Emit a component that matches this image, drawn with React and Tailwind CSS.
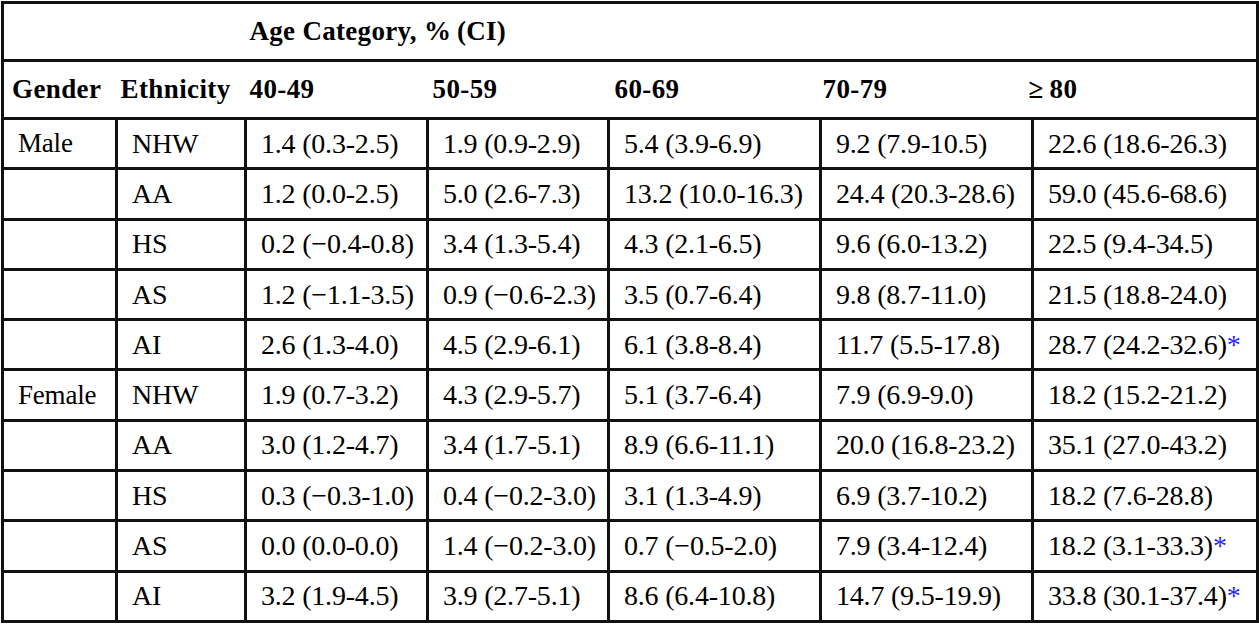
import React from "react";

const rows = [
  ["Male", "NHW", "1.4 (0.3-2.5)", "1.9 (0.9-2.9)", "5.4 (3.9-6.9)", "9.2 (7.9-10.5)", "22.6 (18.6-26.3)"],
  ["", "AA", "1.2 (0.0-2.5)", "5.0 (2.6-7.3)", "13.2 (10.0-16.3)", "24.4 (20.3-28.6)", "59.0 (45.6-68.6)"],
  ["", "HS", "0.2 (\u22120.4-0.8)", "3.4 (1.3-5.4)", "4.3 (2.1-6.5)", "9.6 (6.0-13.2)", "22.5 (9.4-34.5)"],
  ["", "AS", "1.2 (\u22121.1-3.5)", "0.9 (\u22120.6-2.3)", "3.5 (0.7-6.4)", "9.8 (8.7-11.0)", "21.5 (18.8-24.0)"],
  ["", "AI", "2.6 (1.3-4.0)", "4.5 (2.9-6.1)", "6.1 (3.8-8.4)", "11.7 (5.5-17.8)", "28.7 (24.2-32.6)*"],
  ["Female", "NHW", "1.9 (0.7-3.2)", "4.3 (2.9-5.7)", "5.1 (3.7-6.4)", "7.9 (6.9-9.0)", "18.2 (15.2-21.2)"],
  ["", "AA", "3.0 (1.2-4.7)", "3.4 (1.7-5.1)", "8.9 (6.6-11.1)", "20.0 (16.8-23.2)", "35.1 (27.0-43.2)"],
  ["", "HS", "0.3 (\u22120.3-1.0)", "0.4 (\u22120.2-3.0)", "3.1 (1.3-4.9)", "6.9 (3.7-10.2)", "18.2 (7.6-28.8)"],
  ["", "AS", "0.0 (0.0-0.0)", "1.4 (\u22120.2-3.0)", "0.7 (\u22120.5-2.0)", "7.9 (3.4-12.4)", "18.2 (3.1-33.3)*"],
  ["", "AI", "3.2 (1.9-4.5)", "3.9 (2.7-5.1)", "8.6 (6.4-10.8)", "14.7 (9.5-19.9)", "33.8 (30.1-37.4)*"],
];

// header labels and their left padding (header row isn't aligned with the data grid)
const heads = [
  { label: "Gender", cls: "pl-[8px]" },
  { label: "Ethnicity", cls: "pl-[4px]" },
  { label: "40-49", cls: "pl-[4px]" },
  { label: "50-59", cls: "pl-[5px]" },
  { label: "60-69", cls: "pl-[6px]" },
  { label: "70-79", cls: "pl-[2px]" },
  { label: "\u2265\u200980", cls: "pl-0" },
];

const Cell = ({ text, first }) => {
  const star = text.endsWith("*");
  const value = star ? text.slice(0, -1) : text;
  return (
    <td
      className={`h-[50.3px] border-[3px] border-[#111] align-middle whitespace-nowrap tracking-[-0.2px] ${
        first ? "pl-[14px] text-[27px]" : "pl-[14px]"
      }`}
    >
      {value}
      {star && <span className="text-[#1f1fff]">*</span>}
    </td>
  );
};

export default function App() {
  return (
    <div className="bg-white w-[1259px] h-[624px] overflow-hidden pt-px pl-px">
      <table
        className="table-fixed border-collapse border-[3px] border-[#111] text-black text-[28px] leading-none"
        style={{ fontFamily: '"Liberation Serif", "Times New Roman", serif' }}
      >
        <colgroup>
          <col className="w-[114px]" />
          <col className="w-[129px]" />
          <col className="w-[182px]" />
          <col className="w-[181px]" />
          <col className="w-[212px]" />
          <col className="w-[212px]" />
          <col className="w-[225px]" />
        </colgroup>
        <thead>
          <tr>
            <th colSpan={2} className="h-[58px] border-b-[3px] border-[#111]"></th>
            <th
              colSpan={5}
              className="h-[58px] border-b-[3px] border-[#111] text-left text-[27px] font-bold pl-[4px] tracking-[0.3px]"
            >
              Age Category, %&thinsp;(CI)
            </th>
          </tr>
          <tr>
            {heads.map((h, i) => (
              <th
                key={i}
                className={`h-[58px] border-b-[3px] border-[#111] text-left text-[27px] font-bold tracking-[0.4px] whitespace-nowrap ${h.cls}`}
              >
                {i === 6 ? <span className="inline-block -ml-[4px]">{h.label}</span> : h.label}
              </th>
            ))}
          </tr>
        </thead>
        <tbody>
          {rows.map((r, ri) => (
            <tr key={ri}>
              {r.map((c, ci) => (
                <Cell key={ci} text={c} first={ci === 0} />
              ))}
            </tr>
          ))}
        </tbody>
      </table>
    </div>
  );
}
